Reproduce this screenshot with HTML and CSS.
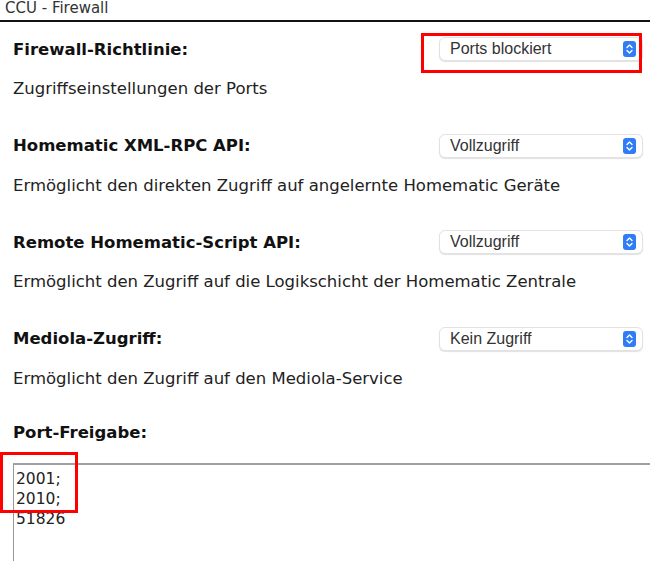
FILE: index.html
```html
<!DOCTYPE html>
<html lang="de">
<head>
<meta charset="utf-8">
<title>CCU - Firewall</title>
<link rel="stylesheet" href="styles.css">
</head>
<body>
<header class="titlebar">CCU - Firewall</header>
<main class="content">
  <section class="setting">
    <div class="row">
      <span class="label">Firewall-Richtlinie:</span>
      <div class="select"><span>Ports blockiert</span><i class="arrow"><svg viewBox="0 0 13 16" width="13" height="16"><path d="M4 6.5 L6.5 4 L9 6.5 M4 9.5 L6.5 12 L9 9.5" fill="none" stroke="#fff" stroke-width="1.4" stroke-linecap="round" stroke-linejoin="round"/></svg></i></div>
    </div>
    <p class="desc">Zugriffseinstellungen der Ports</p>
  </section>
  <section class="setting">
    <div class="row">
      <span class="label">Homematic XML-RPC API:</span>
      <div class="select"><span>Vollzugriff</span><i class="arrow"><svg viewBox="0 0 13 16" width="13" height="16"><path d="M4 6.5 L6.5 4 L9 6.5 M4 9.5 L6.5 12 L9 9.5" fill="none" stroke="#fff" stroke-width="1.4" stroke-linecap="round" stroke-linejoin="round"/></svg></i></div>
    </div>
    <p class="desc">Ermöglicht den direkten Zugriff auf angelernte Homematic Geräte</p>
  </section>
  <section class="setting">
    <div class="row">
      <span class="label">Remote Homematic-Script API:</span>
      <div class="select"><span>Vollzugriff</span><i class="arrow"><svg viewBox="0 0 13 16" width="13" height="16"><path d="M4 6.5 L6.5 4 L9 6.5 M4 9.5 L6.5 12 L9 9.5" fill="none" stroke="#fff" stroke-width="1.4" stroke-linecap="round" stroke-linejoin="round"/></svg></i></div>
    </div>
    <p class="desc">Ermöglicht den Zugriff auf die Logikschicht der Homematic Zentrale</p>
  </section>
  <section class="setting">
    <div class="row">
      <span class="label">Mediola-Zugriff:</span>
      <div class="select"><span>Kein Zugriff</span><i class="arrow"><svg viewBox="0 0 13 16" width="13" height="16"><path d="M4 6.5 L6.5 4 L9 6.5 M4 9.5 L6.5 12 L9 9.5" fill="none" stroke="#fff" stroke-width="1.4" stroke-linecap="round" stroke-linejoin="round"/></svg></i></div>
    </div>
    <p class="desc">Ermöglicht den Zugriff auf den Mediola-Service</p>
  </section>
  <section class="ports">
    <div class="label">Port-Freigabe:</div>
    <div class="textarea">2001;<br>2010;<br>51826</div>
  </section>
</main>
<div class="mark mark-select"></div>
<div class="mark mark-ports"></div>
</body>
</html>
```
FILE: styles.css
```css
html, body {
  margin: 0;
  padding: 0;
  background: #fff;
  overflow: hidden;
}
body {
  width: 650px;
  height: 562px;
  position: relative;
  font-family: "DejaVu Sans", Verdana, sans-serif;
  color: #222;
}
.titlebar {
  box-sizing: border-box;
  height: 22px;
  border-bottom: 2px solid #111;
  padding-left: 5px;
  font-size: 15px;
  line-height: 16px;
  color: #333;
  padding-top: 0;
}
.content {
  padding: 15px 7px 0 13px;
}
.setting {
  margin-bottom: 34.5px;
}
.row {
  display: flex;
  align-items: center;
  height: 24px;
}
.label {
  flex: 1;
  font-weight: bold;
  font-size: 16.5px;
  color: #111;
}
.select {
  width: 204px;
  height: 24px;
  box-sizing: border-box;
  border: 1px solid #e2e2e2;
  border-radius: 6px;
  box-shadow: 0 1px 1px rgba(0,0,0,0.12);
  display: flex;
  align-items: center;
  justify-content: space-between;
  padding: 0 6px 0 10px;
  font-family: "Liberation Sans", Arial, sans-serif;
  font-size: 16px;
  color: #333;
  background: #fff;
}
.arrow {
  width: 13px;
  height: 16px;
  border-radius: 3px;
  background: #2f7cf6;
  display: flex;
}
.desc {
  margin: 18px 0 0 0;
  font-size: 16.5px;
  line-height: 20px;
  color: #222;
}
.ports .label {
  height: 20px;
  line-height: 20px;
  margin-top: 0;
}
.textarea {
  margin-top: 20px;
  margin-right: -20px;
  height: 88px;
  border-top: 2px solid #a0a0a0;
  border-left: 1px solid #999;
  padding: 4px 2px;
  font-size: 15.5px;
  line-height: 20px;
  color: #222;
}
.mark {
  position: absolute;
  border: 3px solid #f00;
  box-sizing: border-box;
}
.mark-select {
  left: 421px;
  top: 33px;
  width: 221px;
  height: 40px;
}
.mark-ports {
  left: 0;
  top: 452px;
  width: 78px;
  height: 61px;
}
```
